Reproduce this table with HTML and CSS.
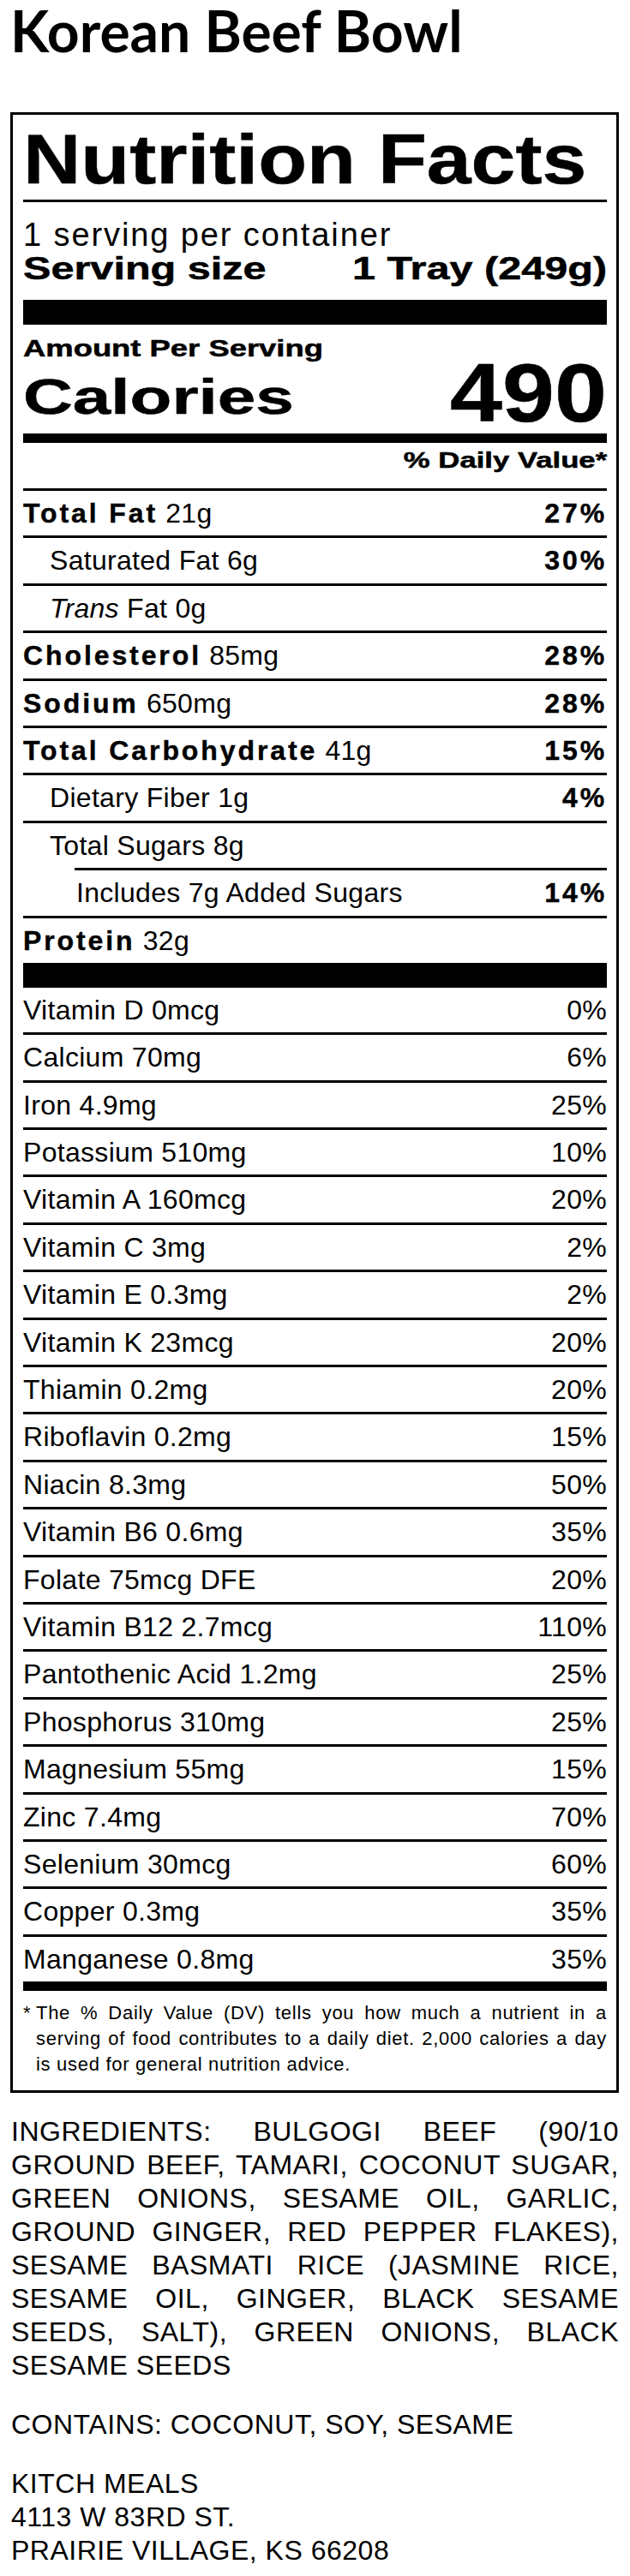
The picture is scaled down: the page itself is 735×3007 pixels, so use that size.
FILE: index.html
```html
<!DOCTYPE html>
<html lang="en">
<head>
<meta charset="utf-8">
<title>Korean Beef Bowl</title>
<link rel="stylesheet" href="styles.css">
</head>
<body>
<div class="page">
  <h1 class="title">Korean Beef Bowl</h1>

  <section class="label">
    <h2 class="nf"><span class="wide wide-nf">Nutrition Facts</span></h2>
    <p class="servings">1 serving per container</p>
    <div class="serving-size">
      <span class="wide wide-ss">Serving size</span>
      <span class="wide wide-ss wide-r">1 Tray (249g)</span>
    </div>
    <div class="bar"></div>
    <p class="amount"><span class="wide wide-amt">Amount Per Serving</span></p>
    <div class="calories">
      <span class="wide wide-cal">Calories</span>
      <span class="wide wide-num wide-r">490</span>
    </div>
    <div class="dv-head"><span class="wide wide-dv wide-r">% Daily Value*</span></div>

    <div class="rows">
      <div class="row"><span><b>Total Fat</b> 21g</span><b>27%</b></div>
      <div class="row sub"><span>Saturated Fat 6g</span><b>30%</b></div>
      <div class="row sub"><span><i>Trans</i> Fat 0g</span></div>
      <div class="row"><span><b>Cholesterol</b> 85mg</span><b>28%</b></div>
      <div class="row"><span><b>Sodium</b> 650mg</span><b>28%</b></div>
      <div class="row"><span><b>Total Carbohydrate</b> 41g</span><b>15%</b></div>
      <div class="row sub"><span>Dietary Fiber 1g</span><b>4%</b></div>
      <div class="row sub"><span>Total Sugars 8g</span></div>
      <div class="row added"><span>Includes 7g Added Sugars</span><b>14%</b></div>
      <div class="row"><span><b>Protein</b> 32g</span></div>
    </div>

    <div class="bar"></div>

    <div class="rows vitamins">
      <div class="row"><span>Vitamin D 0mcg</span><span>0%</span></div>
      <div class="row"><span>Calcium 70mg</span><span>6%</span></div>
      <div class="row"><span>Iron 4.9mg</span><span>25%</span></div>
      <div class="row"><span>Potassium 510mg</span><span>10%</span></div>
      <div class="row"><span>Vitamin A 160mcg</span><span>20%</span></div>
      <div class="row"><span>Vitamin C 3mg</span><span>2%</span></div>
      <div class="row"><span>Vitamin E 0.3mg</span><span>2%</span></div>
      <div class="row"><span>Vitamin K 23mcg</span><span>20%</span></div>
      <div class="row"><span>Thiamin 0.2mg</span><span>20%</span></div>
      <div class="row"><span>Riboflavin 0.2mg</span><span>15%</span></div>
      <div class="row"><span>Niacin 8.3mg</span><span>50%</span></div>
      <div class="row"><span>Vitamin B6 0.6mg</span><span>35%</span></div>
      <div class="row"><span>Folate 75mcg DFE</span><span>20%</span></div>
      <div class="row"><span>Vitamin B12 2.7mcg</span><span>110%</span></div>
      <div class="row"><span>Pantothenic Acid 1.2mg</span><span>25%</span></div>
      <div class="row"><span>Phosphorus 310mg</span><span>25%</span></div>
      <div class="row"><span>Magnesium 55mg</span><span>15%</span></div>
      <div class="row"><span>Zinc 7.4mg</span><span>70%</span></div>
      <div class="row"><span>Selenium 30mcg</span><span>60%</span></div>
      <div class="row"><span>Copper 0.3mg</span><span>35%</span></div>
      <div class="row"><span>Manganese 0.8mg</span><span>35%</span></div>
    </div>

    <div class="bar-mid"></div>

    <div class="footnote">
      <span class="star">*</span>
      <p>The % Daily Value (DV) tells you how much a nutrient in a serving of food contributes to a daily diet. 2,000 calories a day is used for general nutrition advice.</p>
    </div>
  </section>

  <div class="info">
    <p class="ingredients">INGREDIENTS: BULGOGI BEEF (90/10 GROUND BEEF, TAMARI, COCONUT SUGAR, GREEN ONIONS, SESAME OIL, GARLIC, GROUND GINGER, RED PEPPER FLAKES), SESAME BASMATI RICE (JASMINE RICE, SESAME OIL, GINGER, BLACK SESAME SEEDS, SALT), GREEN ONIONS, BLACK SESAME SEEDS</p>
    <p>CONTAINS: COCONUT, SOY, SESAME</p>
    <p>KITCH MEALS<br>4113 W 83RD ST.<br>PRAIRIE VILLAGE, KS 66208</p>
  </div>
</div>
</body>
</html>
```

FILE: styles.css
```css
* { box-sizing: border-box; }

html, body {
  margin: 0;
  padding: 0;
  background: #fff;
  color: #000;
}

.page {
  padding: 0 13px 0 12px;
  font-family: "Liberation Sans", Arial, sans-serif;
}

.title {
  font-family: Lato, "Liberation Sans", sans-serif;
  font-weight: 700;
  font-size: 66px;
  line-height: 66px;
  margin: 3px 0 0;
}

.label {
  margin-top: 62px;
  border: 3px solid #000;
  padding: 0 11px 15px 12px;
}

.wide {
  display: inline-block;
  white-space: nowrap;
  transform-origin: 0 50%;
  -webkit-text-stroke: 0.5px #000;
}
.wide-r { transform-origin: 100% 50%; }
.wide-nf { transform: scaleX(1.15); }
.wide-ss { transform: scaleX(1.35); }
.wide-amt { transform: scaleX(1.30); }
.wide-cal { transform: scaleX(1.38); }
.wide-num { transform: scaleX(1.13); }
.wide-dv { transform: scaleX(1.31); }

.nf {
  font-size: 81px;
  line-height: 81px;
  font-weight: 700;
  margin: 12px 0 0;
  padding-bottom: 6px;
  border-bottom: 3px solid #000;
}

.servings {
  font-size: 38px;
  line-height: 42px;
  letter-spacing: 1.9px;
  margin: 17px 0 0;
}

.serving-size {
  display: flex;
  justify-content: space-between;
  font-size: 36px;
  line-height: 38px;
  font-weight: 700;
}

.bar {
  height: 29px;
  background: #000;
  margin-top: 17px;
}
.rows + .bar { margin-top: 0; }

.amount {
  font-size: 28px;
  line-height: 28px;
  font-weight: 700;
  margin: 14px 0 0;
}

.calories {
  display: flex;
  justify-content: space-between;
  align-items: flex-end;
  margin-top: 5px;
  padding-bottom: 14px;
  border-bottom: 11px solid #000;
  font-weight: 700;
}
.wide-cal {
  font-size: 58px;
  line-height: 58px;
}
.wide-num {
  font-size: 97px;
  line-height: 66px;
}

.dv-head {
  text-align: right;
  font-size: 26.5px;
  line-height: 27px;
  font-weight: 700;
  margin-top: 7px;
  padding-bottom: 19px;
}

.row {
  display: flex;
  justify-content: space-between;
  height: 55.4px;
  border-top: 3px solid #000;
  font-size: 32px;
  line-height: 52.4px;
  letter-spacing: 0.3px;
  white-space: nowrap;
}
.row b {
  font-weight: 700;
  letter-spacing: 2.9px;
  -webkit-text-stroke: 0.4px #000;
}
.row i { font-style: italic; }
.row.sub { padding-left: 31px; }
.row.added {
  margin-left: 60px;
  padding-left: 2px;
}

.vitamins .row:first-child {
  border-top: 0;
  height: 52.4px;
}

.bar-mid {
  height: 11px;
  background: #000;
}

.footnote {
  display: flex;
  margin-top: 11px;
  font-size: 22px;
  line-height: 30px;
  letter-spacing: 0.7px;
}
.footnote .star {
  flex: 0 0 15px;
  letter-spacing: 0;
}
.footnote p {
  flex: 1;
  margin: 0;
  text-align: justify;
}

.info {
  margin-top: 26px;
  padding-left: 1px;
  font-size: 32px;
  line-height: 39px;
  letter-spacing: 0.5px;
}
.info p {
  margin: 0 0 30px;
}
.info .ingredients {
  text-align: justify;
}
```
